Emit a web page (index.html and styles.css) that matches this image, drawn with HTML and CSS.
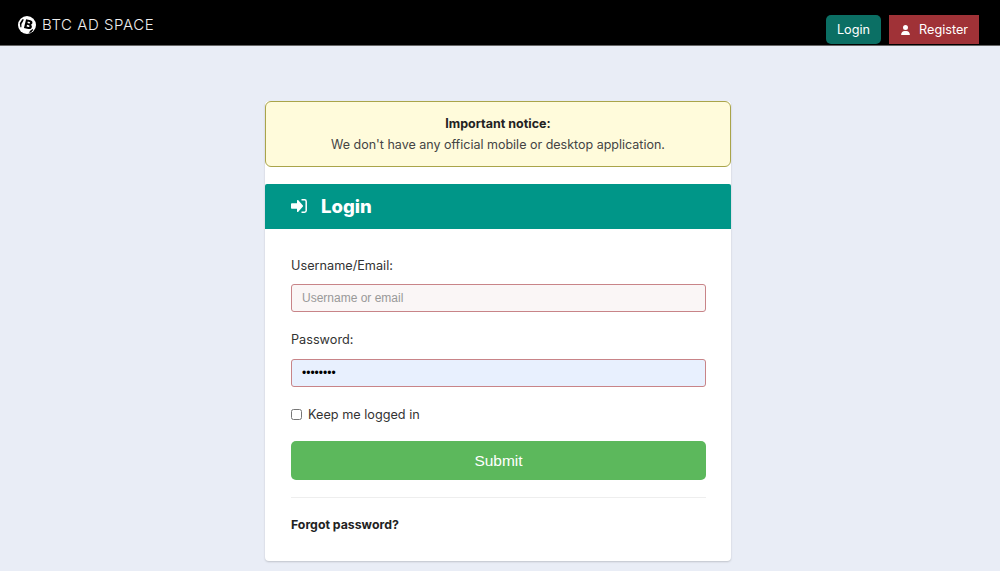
FILE: index.html
```html
<!DOCTYPE html>
<html lang="en">
<head>
<meta charset="utf-8">
<title>BTC AD SPACE</title>
<link rel="stylesheet" href="styles.css">
</head>
<body>
<header class="topbar">
  <a class="brand" href="#">
    <svg class="brand-icon" viewBox="0 0 20 20" aria-hidden="true"><circle cx="10" cy="10" r="10" fill="#fff"/><path d="M2 8 L4.800 3.500 L6.500 3.800 L5 7 L3.800 9 L3.800 12.500 L2.600 12.500z" fill="#000"/><path d="M12 18.500 L14 15.800 L16.500 14.500 L16.800 15.500 L14.500 18.300z" fill="#000"/><g transform="rotate(14 11 10)"><path d="M7.500 4.300h4.800c2 0 3 1.100 3 2.500 0 1-.5 1.700-1.300 2.100 1.100.4 1.800 1.200 1.800 2.400 0 1.800-1.400 2.900-3.500 2.900H7.500z" fill="#000"/><path d="M10 6.300h1.800c.7 0 1 .3 1 .8s-.3.900-1 .9H10zM10 10h2c.8 0 1.100.4 1.100.9s-.3 1-1.100 1h-2z" fill="#fff"/></g></svg>
    <span class="brand-name">BTC AD SPACE</span>
  </a>
  <nav class="topnav">
    <a class="btn btn-login" href="#">Login</a>
    <a class="btn btn-register" href="#">
      <svg class="user-icon" viewBox="0 0 448 512" aria-hidden="true"><path fill="currentColor" d="M224 256a128 128 0 1 0 0-256 128 128 0 1 0 0 256zm-45.700 48C79.800 304 0 383.800 0 482.300 0 498.700 13.300 512 29.700 512h388.600c16.400 0 29.700-13.300 29.700-29.700C448 383.800 368.200 304 269.700 304z"/></svg>
      Register
    </a>
  </nav>
</header>
<main class="page">
  <section class="card">
    <div class="notice">
      <strong class="notice-title">Important notice:</strong>
      <p class="notice-text">We don't have any official mobile or desktop application.</p>
    </div>
    <h1 class="card-head">
      <svg class="login-icon" viewBox="0 0 16 14" aria-hidden="true"><path fill="currentColor" d="M.8 4.300H6V1.600c0-.6.7-.9 1.100-.5l4.800 5.400c.3.300.3.700 0 1l-4.800 5.400c-.4.400-1.100.1-1.100-.5V9.700H.8c-.4 0-.8-.4-.8-.8V5.100c0-.4.400-.8.800-.8z"/><path fill="none" stroke="currentColor" stroke-width="1.500" d="M10.500.8h3c.8 0 1.700.7 1.700 1.700v9c0 1-.9 1.700-1.700 1.700h-3"/></svg>
      <span>Login</span>
    </h1>
    <form class="form">
      <label class="label" for="user">Username/Email:</label>
      <input class="input input-user" id="user" type="text" placeholder="Username or email">
      <label class="label label-pass" for="pass">Password:</label>
      <input class="input input-pass" id="pass" type="password" value="password">
      <label class="keep"><input class="check" type="checkbox"> Keep me logged in</label>
      <button class="submit" type="button">Submit</button>
      <hr class="rule">
      <a class="forgot" href="#">Forgot password?</a>
    </form>
  </section>
</main>
</body>
</html>
```
FILE: styles.css
```css
* { box-sizing: border-box; }
html, body { height: 100%; }
body {
  margin: 0;
  background: #e9edf6;
  font-family: "Inter", "Open Sans", sans-serif;
  color: #212529;
  overflow: hidden;
}
a { text-decoration: none; color: inherit; }

.topbar {
  height: 46px;
  background: #000;
  display: flex;
  align-items: flex-start;
  justify-content: space-between;
  padding: 0 21px 0 18px;
  border-bottom: 1px solid #666;
}
.brand { display: flex; align-items: center; gap: 6px; margin-top: 16px; height: 18px; color: #eee; }
.brand-icon { width: 18px; height: 18px; }
.brand-name { font: 300 15px "Inter", sans-serif; letter-spacing: .55px; margin-bottom: 2px; }
.topnav { display: flex; gap: 8px; margin-top: 15px; }
.btn {
  height: 29px;
  display: flex;
  align-items: center;
  font-size: 12.700px;
  color: #fff;
}
.btn-login { background: #0b6f64; width: 55px; justify-content: center; border-radius: 5px; }
.btn-register { background: #a03237; width: 90px; padding: 0 0 0 12px; gap: 9px; }
.user-icon { width: 9px; height: 10px; }

.page { display: flex; justify-content: center; padding: 55px 4px 0 0; }
.card {
  width: 466px;
  background: #fff;
  border-radius: 4px;
  box-shadow: 0 1px 2px rgba(0,0,0,.18);
  padding-bottom: 27px;
}
.notice {
  height: 66px;
  background: #fffbdb;
  border: 1px solid #a9a44a;
  border-radius: 6px;
  text-align: center;
  padding-top: 13px;
  font-size: 12.500px;
  color: #444;
}
.notice-title { display: block; color: #222; line-height: 18px; font-weight: 700; }
.notice-text { margin: 3px 0 0; line-height: 18px; }
.card-head {
  margin: 17px 0 0;
  height: 45px;
  background: #009688;
  color: #fff;
  font-size: 18.500px;
  font-weight: 800;
  display: flex;
  align-items: center;
  gap: 14px;
  padding: 0 0 2px 26px;
  border-radius: 2px 2px 0 0;
}
.login-icon { width: 16px; height: 14px; }
.form { display: flex; flex-direction: column; padding: 28px 25px 0 26px; }
.label { font-size: 12.700px; line-height: 18px; color: #333; }
.input {
  height: 28px;
  margin-top: 9px;
  padding: 0 10px;
  border: 1px solid #c88488;
  border-radius: 3px;
  font: 12px "Liberation Sans", sans-serif;
  color: #000;
  outline: none;
}
.input::placeholder { color: #999; opacity: 1; }
.input-user { background: #faf6f6; }
.input-pass { background: #e8f0fe; margin-top: 10px; }
.label-pass { margin-top: 19px; }
.keep { display: flex; align-items: center; margin-top: 18px; height: 18px; font-size: 12.700px; color: #333; gap: 6px; }
.check { margin: 0; width: 11px; height: 11px; }
.submit {
  margin-top: 18px;
  height: 39px;
  border: none;
  border-radius: 5px;
  background: #5cb85c;
  color: #fff;
  font: 15.500px "Liberation Sans", sans-serif;
}
.rule { width: 100%; margin: 17px 0 0; border: 0; border-top: 1px solid #eee; }
.forgot { margin-top: 18px; font-size: 12.300px; font-weight: 700; line-height: 18px; color: #222; }
```
